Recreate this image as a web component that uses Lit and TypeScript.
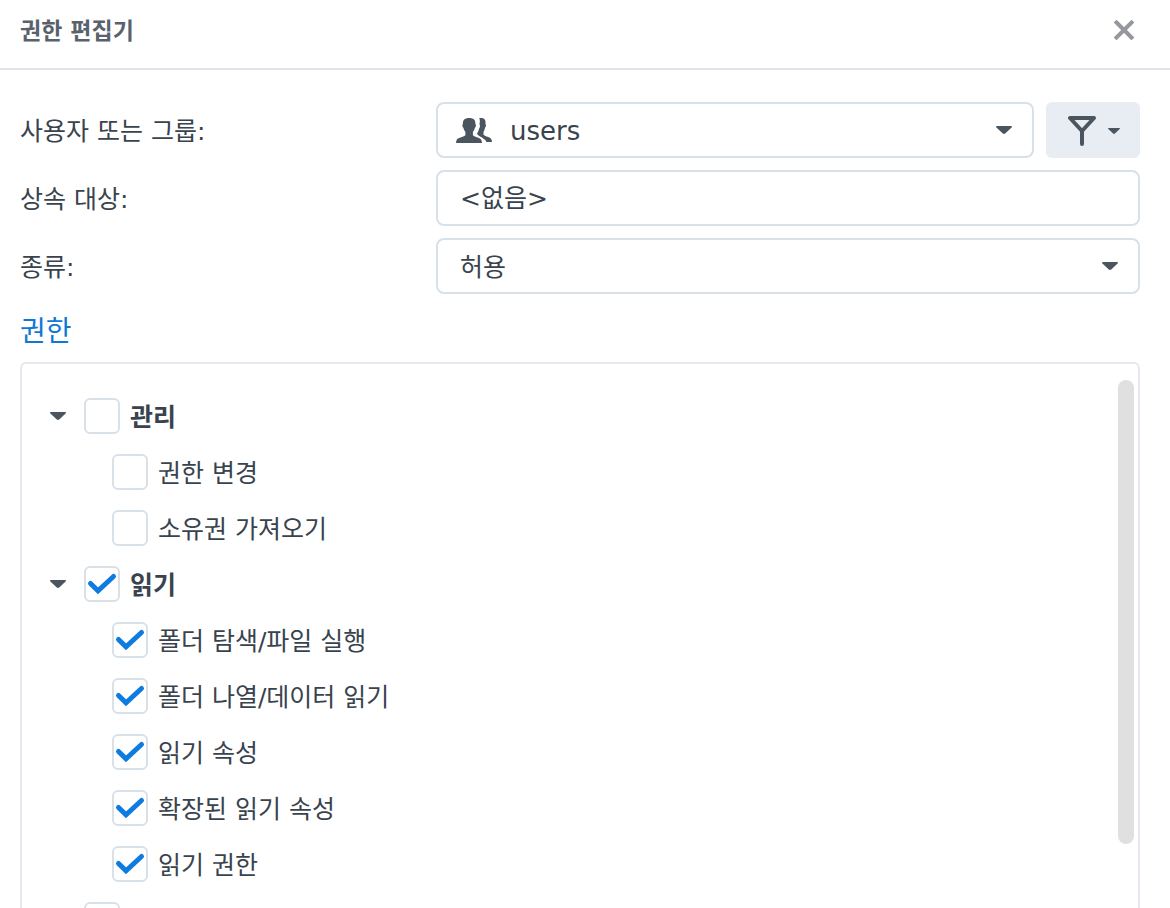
import { LitElement, html, css, svg, nothing } from "lit";
import { customElement, property, state } from "lit/decorators.js";
import { classMap } from "lit/directives/class-map.js";

interface Permission {
  id: string;
  label: string;
  checked: boolean;
}

interface PermissionGroup extends Permission {
  items: Permission[];
}

const caret = svg`<path d="M0.8 0h14.400q1.200 0.4 0.4 1.500L9.200 7.800q-1.200 1-2.400 0L0.4 1.500Q-0.4 0.4 0.8 0z" fill="currentColor"/>`;

@customElement("permission-check")
class PermissionCheck extends LitElement {
  @property() label = "";
  @property() name = "";
  @property({ type: Boolean }) checked = false;
  @property({ type: Boolean }) strong = false;

  static styles = css`
    :host {
      display: block;
    }
    .option {
      display: flex;
      align-items: center;
      gap: 10px;
      height: 56px;
      white-space: nowrap;
    }
    .box {
      display: grid;
      width: 36px;
      height: 36px;
    }
    .input,
    .mark {
      grid-area: 1 / 1;
      width: 36px;
      height: 36px;
    }
    .input {
      appearance: none;
      box-sizing: border-box;
      margin: 0;
      border: 2px solid #d8e0e8;
      border-radius: 6px;
      background: #fff;
    }
    .mark {
      pointer-events: none;
      visibility: hidden;
    }
    .input:checked + .mark {
      visibility: visible;
    }
    .text {
      padding-top: 4px;
    }
    .strong {
      font-weight: 700;
    }
  `;

  render() {
    return html`<label class="option">
      <span class="box">
        <input
          class="input"
          type="checkbox"
          aria-label=${this.label || this.name}
          .checked=${this.checked}
          @change=${(e: Event) => (this.checked = (e.target as HTMLInputElement).checked)}
        />
        <svg class="mark" viewBox="0 0 36 36" aria-hidden="true">
          <path d="M6.500 17.500l7.500 7.300L29.500 10.500" fill="none" stroke="#0f7ae0" stroke-width="5" stroke-linecap="round" />
        </svg>
      </span>
      <span class=${classMap({ text: true, strong: this.strong })}>${this.label}</span>
    </label>`;
  }
}

@customElement("app-root")
class AppRoot extends LitElement {
  @state() private collapsed = new Set<string>();

  private groups: PermissionGroup[] = [
    {
      id: "admin",
      label: "관리",
      checked: false,
      items: [
        { id: "change", label: "권한 변경", checked: false },
        { id: "own", label: "소유권 가져오기", checked: false },
      ],
    },
    {
      id: "read",
      label: "읽기",
      checked: true,
      items: [
        { id: "traverse", label: "폴더 탐색/파일 실행", checked: true },
        { id: "list", label: "폴더 나열/데이터 읽기", checked: true },
        { id: "attr", label: "읽기 속성", checked: true },
        { id: "xattr", label: "확장된 읽기 속성", checked: true },
        { id: "perm", label: "읽기 권한", checked: true },
      ],
    },
    { id: "write", label: "", checked: false, items: [] },
  ];

  static styles = css`
    :host {
      display: block;
      height: 100vh;
      overflow: hidden;
      background: #fff;
      color: #39434d;
      font-family: "DejaVu Sans", "Noto Sans CJK KR", sans-serif;
      font-size: 25px;
      line-height: 32px;
    }
    .header {
      display: flex;
      align-items: center;
      justify-content: space-between;
      box-sizing: border-box;
      height: 70px;
      padding: 0 34px 8px 20px;
      border-bottom: 2px solid #e1e5eb;
    }
    .title {
      margin: 0;
      padding-top: 2px;
      font-size: 23px;
      font-weight: 700;
      color: #59626c;
    }
    button {
      border: 0;
      padding: 0;
      background: none;
      color: inherit;
      font: inherit;
    }
    .close {
      display: flex;
      color: #94979e;
    }
    .body {
      padding: 32px 30px 0 20px;
    }
    .form {
      display: grid;
      grid-template-columns: 416px 1fr;
      row-gap: 12px;
      align-items: center;
    }
    .caption {
      padding-top: 4px;
    }
    .line {
      display: flex;
      gap: 12px;
    }
    .field {
      display: flex;
      flex: 1;
      align-items: center;
      box-sizing: border-box;
      height: 56px;
      min-width: 0;
      border: 2px solid #d8e0e8;
      border-radius: 8px;
      padding: 0 20px 0 0;
    }
    .people {
      margin-left: 18px;
      flex: none;
    }
    .control {
      appearance: none;
      flex: 1;
      min-width: 0;
      box-sizing: border-box;
      height: 52px;
      border: 0;
      margin: 0;
      padding: 4px 22px 0;
      outline: 0;
      background: none;
      color: inherit;
      font: inherit;
    }
    .entry {
      padding: 0 22px 4px;
    }
    .latin {
      padding: 2px 18px 0;
      font-size: 26px;
    }
    .filter {
      display: flex;
      align-items: center;
      justify-content: center;
      gap: 12px;
      width: 94px;
      height: 56px;
      border-radius: 6px;
      padding: 2px 0 0 2px;
      background: #e8ecf3;
    }
    .icon {
      display: block;
      flex: none;
      color: #4b5560;
    }
    .section {
      margin: 0;
      padding: 18px 0 10px;
      font-size: 28px;
      line-height: 40px;
      font-weight: 400;
      color: #0f77d6;
    }
    .panel {
      display: flex;
      justify-content: space-between;
      border: 2px solid #e4e9ef;
      border-radius: 6px;
      padding: 16px 4px 16px 28px;
    }
    .tree {
      padding-top: 8px;
    }
    .group {
      display: flex;
      align-items: center;
      gap: 18px;
      height: 56px;
    }
    .children {
      padding-left: 62px;
    }
    .thumb {
      width: 16px;
      height: 464px;
      border-radius: 8px;
      background: #e0e0e0;
    }
  `;

  private toggle(id: string) {
    const next = new Set(this.collapsed);
    next.has(id) ? next.delete(id) : next.add(id);
    this.collapsed = next;
  }

  private arrow(width = 16, height = 8) {
    return html`<svg class="icon" width=${width} height=${height} viewBox="0 0 16 8.4" preserveAspectRatio="none" aria-hidden="true">${caret}</svg>`;
  }

  private renderGroup(group: PermissionGroup) {
    return html`
      <div class="group">
        <button type="button" aria-label=${group.label || group.id} @click=${() => this.toggle(group.id)}>
          ${this.arrow()}
        </button>
        <permission-check strong .label=${group.label} .name=${group.id} .checked=${group.checked}></permission-check>
      </div>
      ${this.collapsed.has(group.id)
        ? nothing
        : html`<div class="children">
            ${group.items.map(
              (item) => html`<permission-check .label=${item.label} .checked=${item.checked}></permission-check>`
            )}
          </div>`}
    `;
  }

  render() {
    return html`
      <header class="header">
        <h1 class="title">권한 편집기</h1>
        <button class="close" type="button" aria-label="닫기">
          <svg width="24" height="24" viewBox="0 0 24 24" aria-hidden="true">
            <path d="M4.500 4.500l15 15M19.500 4.500l-15 15" fill="none" stroke="currentColor" stroke-width="4" stroke-linecap="square" />
          </svg>
        </button>
      </header>
      <main class="body">
        <form class="form">
          <label class="caption" for="who">사용자 또는 그룹:</label>
          <div class="line">
            <div class="field">
              <svg class="icon people" width="36" height="28" viewBox="0 0 36 28" aria-hidden="true">
                <path
                  fill="currentColor"
                  d="M13.200 2c4.300 0 6.500 2 6.200 6 1 .6.600 3.300-.5 3.800-.4 1.900-1 3-2 4.100v3.400c1.500 1.500 5 2 7.100 3.200 1.400 1 2 2.700 2 4.500H0c0-1.800.6-3.500 2-4.500 2.100-1.200 5.700-1.700 7.400-3.200v-3.400c-1-1.100-1.700-2.200-2-4.100C6.300 11.300 5.900 8.600 6.900 8 6.600 4 8.900 2 13.200 2z"
                />
                <path
                  fill="currentColor"
                  d="M23.200 2h2.600c3 .4 4.100 2.400 3.700 6 .8.800.4 3.200-.5 3.800-.3 1.800-.8 3-1.500 4v2.900c1.600 1.500 4.500 1.900 6.400 3 1.400.9 2 2.100 2.100 4.300h-5.500c-1.100-3-4.300-4-7.300-6-1.200-.8-1.900-1.600-2.200-2.500 1.200-1.600 1.700-2.900 1.900-4.400 1.200-1.600 1.400-3.300.6-4.800C24 5.400 24 3.600 23.200 2z"
                />
              </svg>
              <select id="who" class="control latin">
                <option>users</option>
              </select>
              ${this.arrow()}
            </div>
            <button class="filter" type="button" aria-label="필터">
              <svg class="icon" width="28" height="30" viewBox="0 0 28 30" aria-hidden="true">
                <path
                  d="M2 2h24L14 15zM14 15v13"
                  fill="none"
                  stroke="currentColor"
                  stroke-width="4"
                  stroke-linejoin="round"
                  stroke-linecap="round"
                />
              </svg>
              ${this.arrow(12, 6)}
            </button>
          </div>
          <label class="caption" for="from">상속 대상:</label>
          <div class="field"><input id="from" class="control entry" type="text" readonly .value=${"<없음>"} /></div>
          <label class="caption" for="kind">종류:</label>
          <div class="field">
            <select id="kind" class="control">
              <option>허용</option>
            </select>
            ${this.arrow()}
          </div>
        </form>
        <h2 class="section">권한</h2>
        <section class="panel">
          <div class="tree">${this.groups.map((g) => this.renderGroup(g))}</div>
          <div class="thumb"></div>
        </section>
      </main>
    `;
  }
}
